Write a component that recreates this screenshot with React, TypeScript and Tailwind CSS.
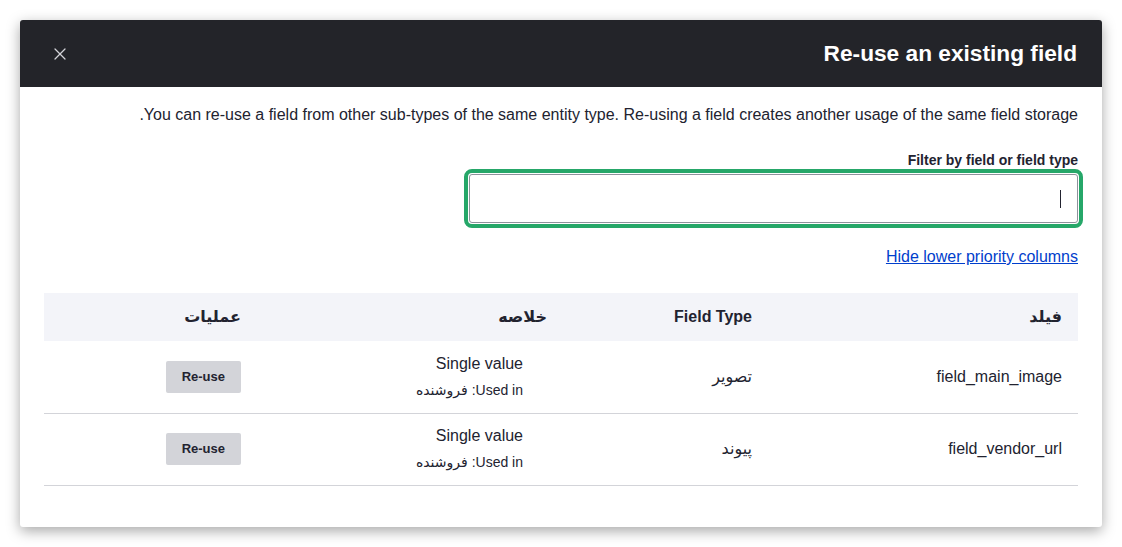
import { X } from "lucide-react"

type FieldRow = {
    name: string
    type: string
    summary: string
    usedIn: string
}

const rows: FieldRow[] = [
    { name: "field_main_image", type: "تصویر", summary: "Single value", usedIn: "فروشنده" },
    { name: "field_vendor_url", type: "پیوند", summary: "Single value", usedIn: "فروشنده" },
]

export default function App() {
    return (
        <div className="h-[547px] w-full bg-white p-5 font-['Liberation_Sans','DejaVu_Sans',sans-serif] text-[#222330]">
            <div dir="rtl" className="flex h-full flex-col overflow-hidden rounded-[3px] bg-white shadow-[0_4px_14px_rgba(0,0,0,0.35)]">
                {/* Header */}
                <div className="flex h-[67px] shrink-0 items-center justify-between bg-[#232429] pl-[30px] pr-[25px]">
                    <h1 className="text-[22.7px] font-bold leading-none text-white">Re-use an existing field</h1>
                    <button className="flex h-5 w-5 items-center justify-center text-[#d3d4d9]">
                        <X className="h-5 w-5" strokeWidth={1.5} />
                    </button>
                </div>

                {/* Body */}
                <div className="flex-1 px-6 pt-[16px]">
                    <p className="text-[16px] leading-6">
                        You can re-use a field from other sub-types of the same entity type. Re-using a field creates another usage of the same field storage.
                    </p>

                    <div className="mt-6">
                        <label className="block text-[14px] font-bold leading-[18px]">Filter by field or field type</label>
                        <div className="mt-[5px] w-[609px] rounded-[3px] outline-4 outline-offset-1 outline-[#26a769] outline-solid">
                            <div className="flex h-[49px] items-center rounded-[3px] border border-[#8e929c] bg-white pr-4">
                                <span className="h-[18px] w-px bg-[#222330]" />
                            </div>
                        </div>
                    </div>

                    <div className="mt-[22px]">
                        <a href="#" className="text-[16px] leading-5 text-[#003ecc] underline">Hide lower priority columns</a>
                    </div>

                    <table className="mt-[24px] w-full table-fixed border-collapse text-right">
                        <thead>
                            <tr className="h-12 bg-[#f3f4f9]">
                                <th className="w-[310px] px-4 text-[16px] font-bold">فیلد</th>
                                <th className="w-[205px] px-4 text-[16px] font-bold">Field Type</th>
                                <th className="w-[306px] px-4 text-[16px] font-bold">خلاصه</th>
                                <th className="px-4 text-[16px] font-bold">عملیات</th>
                            </tr>
                        </thead>
                        <tbody>
                            {rows.map((row) => (
                                <tr key={row.name} className="h-[72px] border-b border-[#d3d4d9]">
                                    <td className="px-4 text-[16px]">{row.name}</td>
                                    <td className="px-4 text-[16px]">{row.type}</td>
                                    <td className="px-4">
                                        <ul className="pr-6">
                                            <li className="text-[16px] leading-6">{row.summary}</li>
                                            <li className="mt-[2px] text-[14px] leading-6">Used in: {row.usedIn}</li>
                                        </ul>
                                    </td>
                                    <td className="px-4">
                                        <button className="h-8 rounded-[2px] bg-[#d3d4d9] px-4 text-[13px] font-bold text-[#222330]">
                                            Re-use
                                        </button>
                                    </td>
                                </tr>
                            ))}
                        </tbody>
                    </table>
                </div>
            </div>
        </div>
    )
}
